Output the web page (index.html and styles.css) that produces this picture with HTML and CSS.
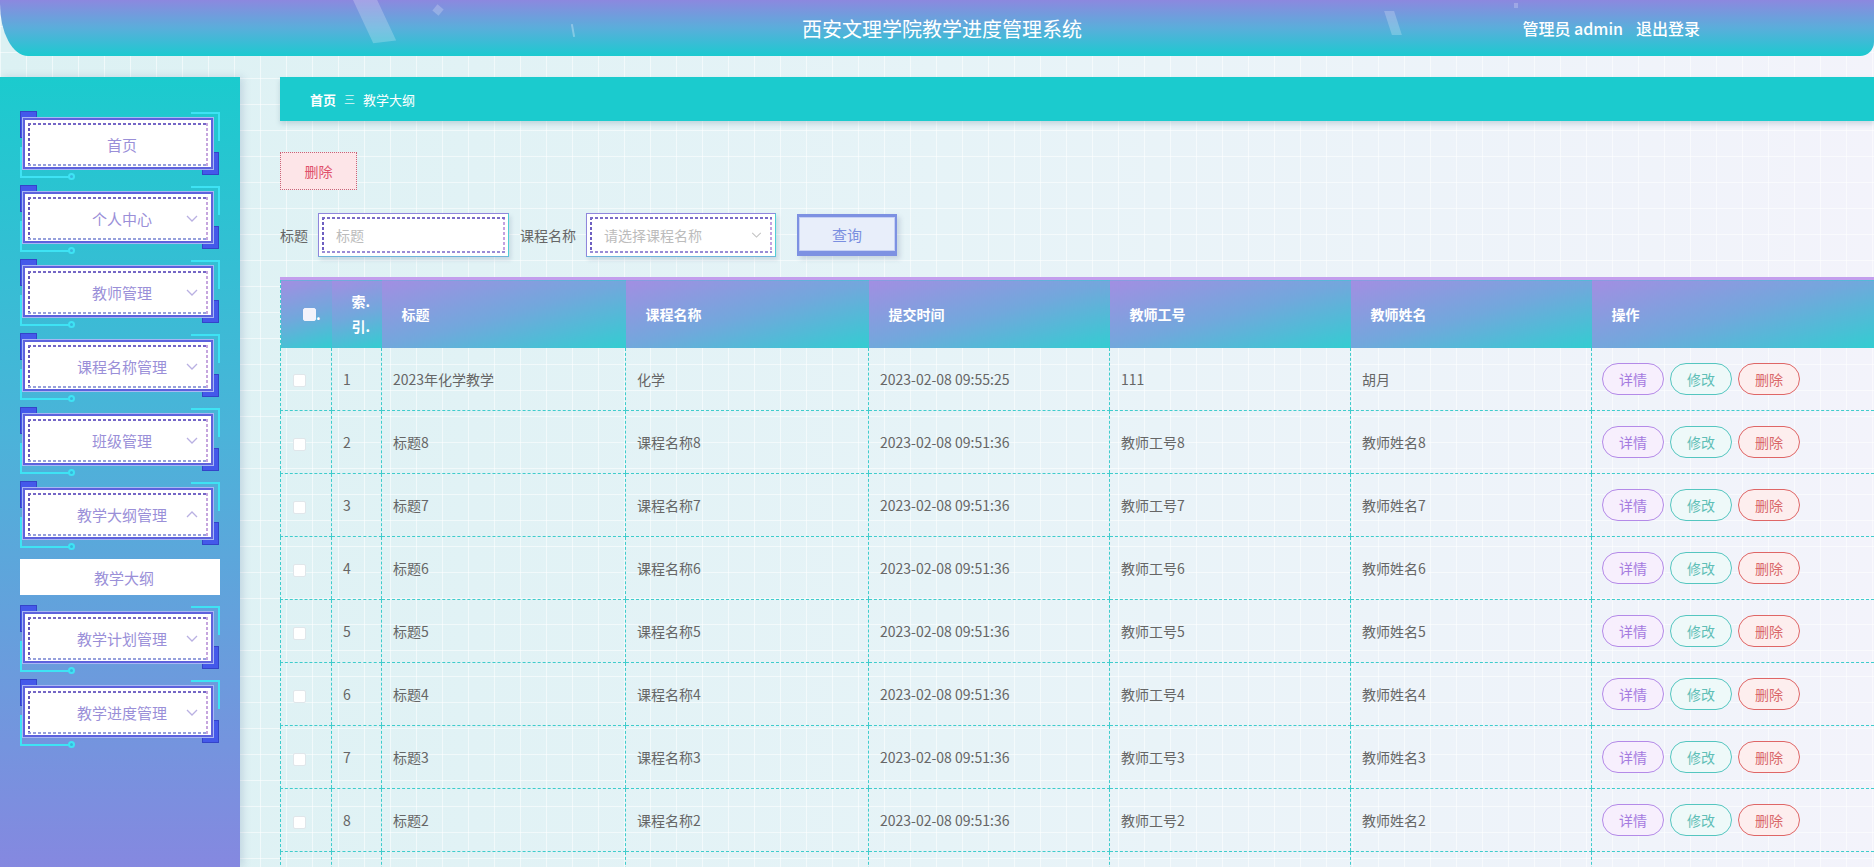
FILE: index.html
```html
<!DOCTYPE html>
<html lang="zh-CN">
<head>
<meta charset="utf-8">
<title>西安文理学院教学进度管理系统</title>
<link rel="stylesheet" href="styles.css">
</head>
<body>
<header class="header">
  <span class="deco d1"></span>
  <span class="deco d2"></span>
  <span class="deco d3"></span>
  <span class="deco d4"></span>
  <span class="deco d5"></span>
  <div class="header-side"></div>
  <div class="title">西安文理学院教学进度管理系统</div>
  <div class="header-side user"><span>管理员 admin</span><span>退出登录</span></div>
</header>

<div class="layout">
  <aside class="sidebar">
    <div class="menu-item">
      <span class="blk tl"></span><span class="blk br"></span><span class="ln tr"></span><span class="ln bl"></span><span class="dot"></span>
      <div class="box"><div class="inner">首页</div></div>
    </div>
    <div class="menu-item">
      <span class="blk tl"></span><span class="blk br"></span><span class="ln tr"></span><span class="ln bl"></span><span class="dot"></span>
      <div class="box"><div class="inner">个人中心<svg class="chev" viewBox="0 0 12 7"><path d="M1 1l5 5 5-5"/></svg></div></div>
    </div>
    <div class="menu-item">
      <span class="blk tl"></span><span class="blk br"></span><span class="ln tr"></span><span class="ln bl"></span><span class="dot"></span>
      <div class="box"><div class="inner">教师管理<svg class="chev" viewBox="0 0 12 7"><path d="M1 1l5 5 5-5"/></svg></div></div>
    </div>
    <div class="menu-item">
      <span class="blk tl"></span><span class="blk br"></span><span class="ln tr"></span><span class="ln bl"></span><span class="dot"></span>
      <div class="box"><div class="inner">课程名称管理<svg class="chev" viewBox="0 0 12 7"><path d="M1 1l5 5 5-5"/></svg></div></div>
    </div>
    <div class="menu-item">
      <span class="blk tl"></span><span class="blk br"></span><span class="ln tr"></span><span class="ln bl"></span><span class="dot"></span>
      <div class="box"><div class="inner">班级管理<svg class="chev" viewBox="0 0 12 7"><path d="M1 1l5 5 5-5"/></svg></div></div>
    </div>
    <div class="menu-item">
      <span class="blk tl"></span><span class="blk br"></span><span class="ln tr"></span><span class="ln bl"></span><span class="dot"></span>
      <div class="box"><div class="inner">教学大纲管理<svg class="chev" viewBox="0 0 12 7"><path d="M1 6l5-5 5 5"/></svg></div></div>
    </div>
    <div class="sub-item">教学大纲</div>
    <div class="menu-item">
      <span class="blk tl"></span><span class="blk br"></span><span class="ln tr"></span><span class="ln bl"></span><span class="dot"></span>
      <div class="box"><div class="inner">教学计划管理<svg class="chev" viewBox="0 0 12 7"><path d="M1 1l5 5 5-5"/></svg></div></div>
    </div>
    <div class="menu-item">
      <span class="blk tl"></span><span class="blk br"></span><span class="ln tr"></span><span class="ln bl"></span><span class="dot"></span>
      <div class="box"><div class="inner">教学进度管理<svg class="chev" viewBox="0 0 12 7"><path d="M1 1l5 5 5-5"/></svg></div></div>
    </div>
  </aside>

  <main class="main">
    <div class="breadcrumb">
      <span class="bc-home">首页</span>
      <span class="bc-sep">三</span>
      <span class="bc-cur">教学大纲</span>
    </div>

    <div class="toolbar">
      <button class="btn-del">删除</button>
    </div>

    <div class="search">
      <span class="label">标题</span>
      <div class="field"><div class="field-inner"><span class="ph">标题</span></div></div>
      <span class="label label2">课程名称</span>
      <div class="field select"><div class="field-inner"><span class="ph">请选择课程名称</span><svg class="sel-chev" viewBox="0 0 12 7"><path d="M1 1l5 5 5-5"/></svg></div></div>
      <button class="btn-query">查询</button>
    </div>

    <table class="grid">
      <colgroup>
        <col class="c-check"><col class="c-idx"><col class="c-w244"><col class="c-w243"><col class="c-w241"><col class="c-w241"><col class="c-w241"><col>
      </colgroup>
      <thead>
        <tr>
          <th class="th-check"><span class="cb cb-head"></span>.</th>
          <th class="th-idx">索.<br>引.</th>
          <th>标题</th>
          <th>课程名称</th>
          <th>提交时间</th>
          <th>教师工号</th>
          <th>教师姓名</th>
          <th>操作</th>
        </tr>
      </thead>
      <tbody>
        <tr><td class="td-check"><span class="cb"></span></td><td>1</td><td>2023年化学教学</td><td>化学</td><td>2023-02-08 09:55:25</td><td>111</td><td>胡月</td><td class="ops"><span class="op op-detail">详情</span><span class="op op-edit">修改</span><span class="op op-del">删除</span></td></tr>
        <tr><td class="td-check"><span class="cb"></span></td><td>2</td><td>标题8</td><td>课程名称8</td><td>2023-02-08 09:51:36</td><td>教师工号8</td><td>教师姓名8</td><td class="ops"><span class="op op-detail">详情</span><span class="op op-edit">修改</span><span class="op op-del">删除</span></td></tr>
        <tr><td class="td-check"><span class="cb"></span></td><td>3</td><td>标题7</td><td>课程名称7</td><td>2023-02-08 09:51:36</td><td>教师工号7</td><td>教师姓名7</td><td class="ops"><span class="op op-detail">详情</span><span class="op op-edit">修改</span><span class="op op-del">删除</span></td></tr>
        <tr><td class="td-check"><span class="cb"></span></td><td>4</td><td>标题6</td><td>课程名称6</td><td>2023-02-08 09:51:36</td><td>教师工号6</td><td>教师姓名6</td><td class="ops"><span class="op op-detail">详情</span><span class="op op-edit">修改</span><span class="op op-del">删除</span></td></tr>
        <tr><td class="td-check"><span class="cb"></span></td><td>5</td><td>标题5</td><td>课程名称5</td><td>2023-02-08 09:51:36</td><td>教师工号5</td><td>教师姓名5</td><td class="ops"><span class="op op-detail">详情</span><span class="op op-edit">修改</span><span class="op op-del">删除</span></td></tr>
        <tr><td class="td-check"><span class="cb"></span></td><td>6</td><td>标题4</td><td>课程名称4</td><td>2023-02-08 09:51:36</td><td>教师工号4</td><td>教师姓名4</td><td class="ops"><span class="op op-detail">详情</span><span class="op op-edit">修改</span><span class="op op-del">删除</span></td></tr>
        <tr><td class="td-check"><span class="cb"></span></td><td>7</td><td>标题3</td><td>课程名称3</td><td>2023-02-08 09:51:36</td><td>教师工号3</td><td>教师姓名3</td><td class="ops"><span class="op op-detail">详情</span><span class="op op-edit">修改</span><span class="op op-del">删除</span></td></tr>
        <tr><td class="td-check"><span class="cb"></span></td><td>8</td><td>标题2</td><td>课程名称2</td><td>2023-02-08 09:51:36</td><td>教师工号2</td><td>教师姓名2</td><td class="ops"><span class="op op-detail">详情</span><span class="op op-edit">修改</span><span class="op op-del">删除</span></td></tr>
        <tr class="row-cut"><td class="td-check"><span class="cb"></span></td><td></td><td></td><td></td><td></td><td></td><td></td><td></td></tr>
      </tbody>
    </table>
  </main>
</div>
</body>
</html>
```

FILE: styles.css
```css
* { box-sizing: border-box; }

html, body {
  margin: 0;
  height: 100%;
  overflow: hidden;
}

body {
  font-family: "Noto Sans CJK SC", "Noto Sans", "Liberation Sans", sans-serif;
  font-size: 14px;
  color: #666;
  background-color: #e6f4f6;
  background-image:
    linear-gradient(rgba(255,255,255,0.55) 1px, transparent 1px),
    linear-gradient(90deg, rgba(255,255,255,0.55) 1px, transparent 1px),
    linear-gradient(90deg, #dcf1f3 0%, #e6f3f7 50%, #f3f3fb 100%);
  background-size: 26px 26px, 26px 26px, 100% 100%;
}

/* ---------- header ---------- */
.header {
  position: relative;
  height: 56px;
  display: grid;
  grid-template-columns: 1fr auto 1fr;
  align-items: center;
  background: linear-gradient(180deg, #8c88df 0%, #5aaedb 50%, #1ccad0 100%);
  border-bottom-left-radius: 28px 52px;
  border-bottom-right-radius: 14px;
  overflow: hidden;
}

.title {
  color: #fff;
  font-size: 20px;
  padding-left: 10px;
}

.user {
  display: flex;
  justify-content: flex-end;
  gap: 13px;
  padding-right: 174px;
  color: #fff;
  font-size: 16px;
  font-weight: 500;
}

.deco {
  position: absolute;
  background: rgba(255,255,255,0.22);
}
.d1 { left: 362px; top: -4px; width: 24px; height: 46px; transform: skewX(20deg) rotate(-6deg); }
.d2 { left: 434px; top: 6px; width: 8px; height: 8px; transform: rotate(40deg); }
.d3 { left: 572px; top: 24px; width: 2px; height: 13px; transform: rotate(-10deg); background: rgba(255,255,255,0.3); }
.d4 { left: 1388px; top: 11px; width: 10px; height: 24px; transform: skewX(18deg); }
.d5 { left: 1514px; top: 3px; width: 4px; height: 5px; }

/* ---------- layout ---------- */
.layout {
  display: flex;
  margin-top: 21px;
}

.sidebar {
  width: 240px;
  flex-shrink: 0;
  height: calc(100vh - 77px);
  padding-top: 34px;
  background: linear-gradient(180deg, #1bcbce 0%, #4bb3d9 45%, #8588e0 100%);
  box-shadow: 3px 0 8px rgba(60,90,140,0.18);
}

.menu-item {
  position: relative;
  width: 200px;
  height: 74px;
  margin-left: 20px;
  padding: 7px 0 0 3px;
}

.blk {
  position: absolute;
  background: #4459ea;
  border: 1px solid #3444c9;
}
.blk.tl { left: 0; top: 0; width: 17px; height: 27px; }
.blk.br { left: 182px; top: 41px; width: 17px; height: 23px; }

.ln {
  position: absolute;
  border-color: #3ee3f4;
  border-style: solid;
  border-width: 0;
}
.ln.tr { left: 171px; top: 1px; width: 29px; height: 29px; border-top-width: 2px; border-right-width: 2px; }
.ln.bl { left: 0; top: 36px; width: 50px; height: 31px; border-left-width: 2px; border-bottom-width: 2px; }

.dot {
  position: absolute;
  left: 48px;
  top: 62px;
  width: 7px;
  height: 7px;
  border: 2px solid #3ee3f4;
  border-radius: 50%;
  background: #39b6dc;
}

.box {
  position: relative;
  z-index: 1;
  width: 190px;
  height: 51px;
  padding: 3px 3px 1px;
  background: #fff;
  border: 2px solid #5d62dd;
  box-shadow: 0 0 0 1px #a8b7f4;
}

.inner {
  position: relative;
  height: 100%;
  display: flex;
  align-items: center;
  justify-content: center;
  padding-left: 8px;
  color: #9a8fd8;
  font-size: 15px;
  background:
    repeating-linear-gradient(90deg, #7566c6 0 3px, transparent 3px 5px) left top / 100% 2px no-repeat,
    repeating-linear-gradient(90deg, #96a0dc 0 3px, transparent 3px 5px) left bottom / 100% 2px no-repeat,
    repeating-linear-gradient(180deg, #6656b8 0 3px, transparent 3px 5px) left top / 2px 100% no-repeat,
    repeating-linear-gradient(180deg, #c6a6de 0 3px, transparent 3px 5px) right top / 2px 100% no-repeat;
}

.chev {
  position: absolute;
  right: 10px;
  top: 50%;
  width: 12px;
  height: 7px;
  margin-top: -4px;
  fill: none;
  stroke: #b9b0e2;
  stroke-width: 1.3;
}

.sub-item {
  width: 200px;
  height: 36px;
  margin: 4px 0 10px 20px;
  background: #fff;
  display: flex;
  align-items: center;
  justify-content: center;
  padding-left: 8px;
  color: #9a8fd8;
  font-size: 15px;
}

/* ---------- main ---------- */
.main {
  flex: 1;
  min-width: 0;
  margin-left: 40px;
}

.breadcrumb {
  height: 44px;
  display: flex;
  align-items: center;
  gap: 8px;
  padding-left: 30px;
  background: #1bcbce;
  color: #fff;
  font-size: 13px;
  box-shadow: 0 3px 5px rgba(40,90,110,0.18);
}
.bc-home { font-weight: 700; }
.bc-sep { font-size: 11px; opacity: 0.85; }

.toolbar {
  margin-top: 31px;
}

.btn-del {
  display: block;
  width: 77px;
  height: 38px;
  padding: 0;
  font-family: inherit;
  font-size: 14px;
  color: #e0506a;
  background: #fde5e8;
  border: 1px dotted #c86478;
}

.search {
  margin-top: 23px;
  height: 44px;
  display: flex;
  align-items: center;
}

.label {
  color: #666;
  font-size: 14px;
  margin-right: 10px;
}
.label2 { margin-left: 11px; }

.field {
  width: 191px;
  height: 44px;
  padding: 3px;
  background: #fff;
  border: 1px solid #8f86dc;
  border-right-color: #4fcfd6;
  border-bottom-color: #6fb6da;
  box-shadow: 2px 3px 4px rgba(60,80,120,0.15);
}
.field.select { width: 190px; }

.field-inner {
  position: relative;
  height: 100%;
  display: flex;
  align-items: center;
  padding-left: 14px;
  background:
    repeating-linear-gradient(90deg, #7a6cc8 0 3px, transparent 3px 5px) left top / 100% 2px no-repeat,
    repeating-linear-gradient(90deg, #9a8cd6 0 3px, transparent 3px 5px) left bottom / 100% 2px no-repeat,
    repeating-linear-gradient(180deg, #6d5ec0 0 3px, transparent 3px 5px) left top / 2px 100% no-repeat,
    repeating-linear-gradient(180deg, #c4a2e0 0 3px, transparent 3px 5px) right top / 2px 100% no-repeat;
}

.ph {
  color: #bcbcbc;
  font-size: 14px;
}

.sel-chev {
  position: absolute;
  right: 10px;
  top: 50%;
  width: 11px;
  height: 6px;
  margin-top: -3px;
  fill: none;
  stroke: #c2c2c2;
  stroke-width: 1.2;
}

.btn-query {
  width: 100px;
  height: 42px;
  margin-left: 21px;
  padding: 0;
  font-family: inherit;
  font-size: 15px;
  color: #7a8fe0;
  background: #e8eefa;
  border: 2px solid #7d91e2;
  border-top-width: 3px;
  border-bottom-width: 5px;
  box-shadow: inset 0 0 0 1px #c5d0f4, 3px 3px 5px rgba(60,80,120,0.18);
}

/* ---------- table ---------- */
.grid {
  width: 100%;
  margin-top: 20px;
  table-layout: fixed;
  border-collapse: collapse;
}

.c-check { width: 51px; }
.c-idx { width: 50px; }
.c-w244 { width: 244px; }
.c-w243 { width: 243px; }
.c-w241 { width: 241px; }

.grid thead tr {
  border-top: 3px solid #c39eed;
}

.grid th {
  height: 69px;
  padding: 0 20px;
  text-align: left;
  color: #fff;
  font-size: 14px;
  font-weight: 700;
  background: linear-gradient(165deg, #a28ee2 0%, #72a7dc 50%, #32cdd1 100%);
}

.grid th.th-check {
  padding: 0 0 0 22px;
  border-left: 1px dashed #3fcccc;
}
.grid th.th-idx {
  padding: 0 0 0 20px;
  line-height: 25px;
}

.cb {
  display: inline-block;
  width: 13px;
  height: 13px;
  background: #fff;
  border: 1px solid #e0e6ea;
  border-radius: 2px;
  vertical-align: middle;
}
.cb-head {
  background: #f4f3fb;
  border-color: #f4f3fb;
  margin-top: -3px;
}

.grid td {
  height: 63px;
  padding: 0 11px;
  color: #666;
  font-size: 14px;
  white-space: nowrap;
  border-left: 1px dashed #3fcccc;
  border-bottom: 1px dashed #3fcccc;
}

.grid td.td-check {
  padding-left: 12px;
}

.grid td.ops {
  padding-left: 10px;
}

.op {
  display: inline-flex;
  align-items: center;
  justify-content: center;
  width: 62px;
  height: 32px;
  margin-right: 6px;
  border-radius: 16px;
  border: 1px solid;
  font-size: 14px;
  vertical-align: middle;
}
.op-detail { color: #a57be0; border-color: #b48ae8; background: #f7effd; }
.op-edit { color: #5fbfb7; border-color: #55c6c0; background: #eef9f9; }
.op-del { color: #d9676a; border-color: #df6666; background: #fdeeee; }
```
